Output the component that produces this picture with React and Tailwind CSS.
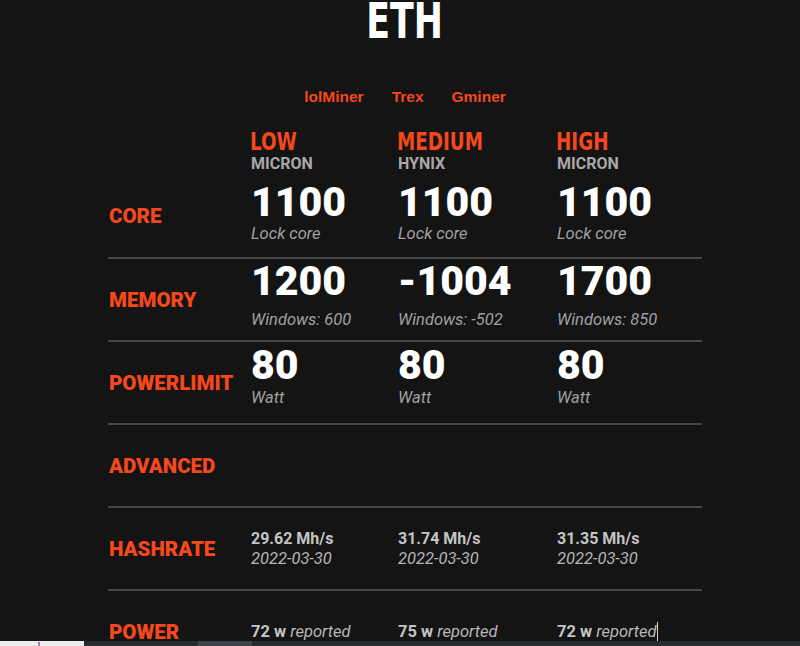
import React from "react";

const cols = [
  { name: "LOW", brand: "MICRON", core: "1100", mem: "1200", win: "Windows: 600", pl: "80", hash: "29.62 Mh/s", power: "72" },
  { name: "MEDIUM", brand: "HYNIX", core: "1100", mem: "-1004", win: "Windows: -502", pl: "80", hash: "31.74 Mh/s", power: "75" },
  { name: "HIGH", brand: "MICRON", core: "1100", mem: "1700", win: "Windows: 850", pl: "80", hash: "31.35 Mh/s", power: "72" },
];

const grid = "grid grid-cols-[142px_147px_159px_146px]";
const label = "flex items-center pl-[1px] text-[20.5px] font-black leading-[24px] text-[#f5481c]";
const num = "pl-[1px] text-[41px] font-black leading-[44px] text-white";
const sub = "pl-[1px] text-[16.5px] italic leading-[20px] text-[#a0a0a0]";
const cond = { fontFamily: "'DejaVu Sans Condensed', 'DejaVu Sans', sans-serif" };

function Line() {
  return <div className="h-[2px] w-full bg-[#474747]" />;
}

export default function App() {
  return (
    <div
      className="relative h-[646px] w-[800px] overflow-hidden bg-[#141414]"
      style={{ fontFamily: "Roboto, 'Liberation Sans', sans-serif" }}
    >
      <div className="ml-[108px] w-[594px]">
        <div className="flex h-[44px] justify-center">
          <span
            className="inline-block scale-x-[0.79] text-[49px] font-bold leading-[44px] text-white"
            style={cond}
          >
            ETH
          </span>
        </div>
        <div
          className="mt-[43px] flex justify-center gap-[28px] text-[15.5px] font-bold leading-[20px] text-[#f5481c]"
          style={{ fontFamily: "'Liberation Sans', Arial, sans-serif" }}
        >
          <span>lolMiner</span>
          <span>Trex</span>
          <span>Gminer</span>
        </div>

        {/* header */}
        <div className={`${grid} mt-[23px]`}>
          <div />
          {cols.map((c) => (
            <div key={c.name}>
              <div className="h-[24px] overflow-visible">
                <span
                  className="inline-block origin-left scale-x-[0.85] text-[24px] font-bold leading-[24px] text-[#f5481c]"
                  style={cond}
                >
                  {c.name}
                </span>
              </div>
              <div className="pl-[1px] text-[16px] font-bold leading-[20px] text-[#a8a8a8]">{c.brand}</div>
            </div>
          ))}
        </div>

        {/* CORE */}
        <div className={`${grid} h-[83px]`}>
          <div className={label}>CORE</div>
          {cols.map((c) => (
            <div key={c.name} className="pt-[6px]">
              <div className={num}>{c.core}</div>
              <div className={sub}>Lock core</div>
            </div>
          ))}
        </div>
        <Line />

        {/* MEMORY */}
        <div className={`${grid} h-[81px]`}>
          <div className={label}>MEMORY</div>
          {cols.map((c) => (
            <div key={c.name}>
              <div className={num}>{c.mem}</div>
              <div className={`${sub} mt-[7px]`}>{c.win}</div>
            </div>
          ))}
        </div>
        <Line />

        {/* POWERLIMIT */}
        <div className={`${grid} h-[81px]`}>
          <div className={label}>POWERLIMIT</div>
          {cols.map((c) => (
            <div key={c.name} className="pt-[1px]">
              <div className={num}>{c.pl}</div>
              <div className={`${sub} mt-[1px]`}>Watt</div>
            </div>
          ))}
        </div>
        <Line />

        {/* ADVANCED */}
        <div className={`${grid} h-[81px]`}>
          <div className={label}>ADVANCED</div>
        </div>
        <Line />

        {/* HASHRATE */}
        <div className={`${grid} h-[81px]`}>
          <div className={label}>HASHRATE</div>
          {cols.map((c) => (
            <div key={c.name} className="flex flex-col justify-center pl-[1px]">
              <div className="text-[16px] font-bold leading-[20px] text-[#c4c4c4]">{c.hash}</div>
              <div className="text-[16.5px] italic leading-[20px] text-[#b4b4b4]">2022-03-30</div>
            </div>
          ))}
        </div>
        <Line />

        {/* POWER */}
        <div className={`${grid} h-[81px]`}>
          <div className={label}>POWER</div>
          {cols.map((c, i) => (
            <div key={c.name} className="flex items-center pl-[1px]">
              <div className="flex items-center text-[16.5px] leading-[20px] text-[#b8b8b8]">
                <span className="font-bold text-[#c4c4c4]">{c.power} w</span>
                <span className="ml-[4px] italic">reported</span>
                {i === 2 && <span className="inline-block h-[19px] w-px bg-[#d0d0d0]" />}
              </div>
            </div>
          ))}
        </div>
      </div>

      {/* taskbar strip */}
      <div className="absolute bottom-0 left-0 flex h-[5px] w-full">
        <div className="relative w-[84px] bg-[#ececec]">
          <div className="absolute left-[38px] top-[1px] h-[4px] w-[2px] bg-[#b070c0]" />
        </div>
        <div className="w-[114px] bg-[#262d31]" />
        <div className="w-[54px] bg-[#3c4349]" />
        <div className="flex-1 bg-[#262d31]" />
      </div>
    </div>
  );
}
